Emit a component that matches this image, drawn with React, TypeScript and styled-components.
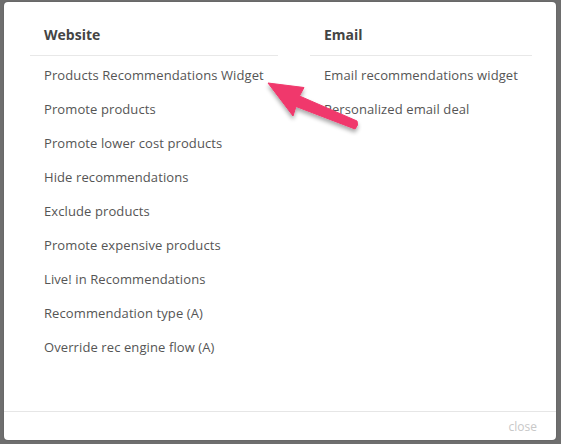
import React from "react";
import styled, { createGlobalStyle } from "styled-components";

const Global = createGlobalStyle`
  html, body { margin: 0; padding: 0; }
  body {
    background: #6e6e6e;
    width: 561px;
    height: 444px;
    overflow: hidden;
    font-family: "Open Sans", "Liberation Sans", Arial, sans-serif;
  }
`;

const Backdrop = styled.div`
  position: relative;
  width: 561px;
  height: 444px;
  padding: 2px 5px 4px 4px;
  box-sizing: border-box;
`;

const Modal = styled.div`
  position: relative;
  height: 100%;
  background: #ffffff;
  border-radius: 4px;
  display: flex;
  flex-direction: column;
  box-shadow: 0 0 2px rgba(0, 0, 0, 0.2);
`;

const Body = styled.div`
  flex: 1;
  display: grid;
  grid-template-columns: 248px 222px;
  column-gap: 32px;
  padding: 22px 24px 0 26px;
`;

const Column = styled.div`
  display: flex;
  flex-direction: column;
`;

const Heading = styled.div`
  font-weight: 700;
  font-size: 14px;
  color: #444444;
  padding: 0 0 0 14px;
  height: 32px;
  line-height: 22px;
  border-bottom: 1px solid #e8e8e8;
  box-sizing: border-box;
`;

const List = styled.ul`
  list-style: none;
  margin: 0;
  padding: 2px 0 0 14px;
`;

const Item = styled.li`
  font-size: 13px;
  letter-spacing: 0.1px;
  color: #555555;
  height: 34px;
  line-height: 34px;
  white-space: nowrap;
`;

const Footer = styled.div`
  border-top: 1px solid #e6e6e6;
  height: 28px;
  display: flex;
  justify-content: flex-end;
  align-items: center;
  padding-right: 19px;
`;

const Close = styled.span`
  font-size: 12px;
  color: #c8c8c8;
`;

const ArrowLayer = styled.svg`
  position: absolute;
  left: 0;
  top: 0;
  pointer-events: none;
`;

const website = [
  "Products Recommendations Widget",
  "Promote products",
  "Promote lower cost products",
  "Hide recommendations",
  "Exclude products",
  "Promote expensive products",
  "Live! in Recommendations",
  "Recommendation type (A)",
  "Override rec engine flow (A)",
];

const email = ["Email recommendations widget", "Personalized email deal"];

export default function App() {
  return (
    <>
      <Global />
      <Backdrop>
        <Modal>
          <Body>
            <Column>
              <Heading>Website</Heading>
              <List>
                {website.map((t) => (
                  <Item key={t}>{t}</Item>
                ))}
              </List>
            </Column>
            <Column>
              <Heading>Email</Heading>
              <List>
                {email.map((t) => (
                  <Item key={t}>{t}</Item>
                ))}
              </List>
            </Column>
          </Body>
          <Footer>
            <Close>close</Close>
          </Footer>
        </Modal>
        <ArrowLayer width="561" height="444" viewBox="0 0 561 444">
          <defs>
            <filter id="arrowShadow" x="-20%" y="-20%" width="140%" height="160%">
              <feGaussianBlur in="SourceAlpha" stdDeviation="2" />
              <feOffset dx="0" dy="3" result="b" />
              <feComponentTransfer>
                <feFuncA type="linear" slope="0.35" />
              </feComponentTransfer>
              <feMerge>
                <feMergeNode />
                <feMergeNode in="SourceGraphic" />
              </feMerge>
            </filter>
          </defs>
          <path
            d="M268 83 L304 87.5 L299.5 96 L357 121 Q359 125 355 129 L296 106.5 L293 116 Z"
            fill="#f0386c"
            stroke="#f0386c"
            strokeWidth="1"
            strokeLinejoin="round"
            filter="url(#arrowShadow)"
          />
        </ArrowLayer>
      </Backdrop>
    </>
  );
}
